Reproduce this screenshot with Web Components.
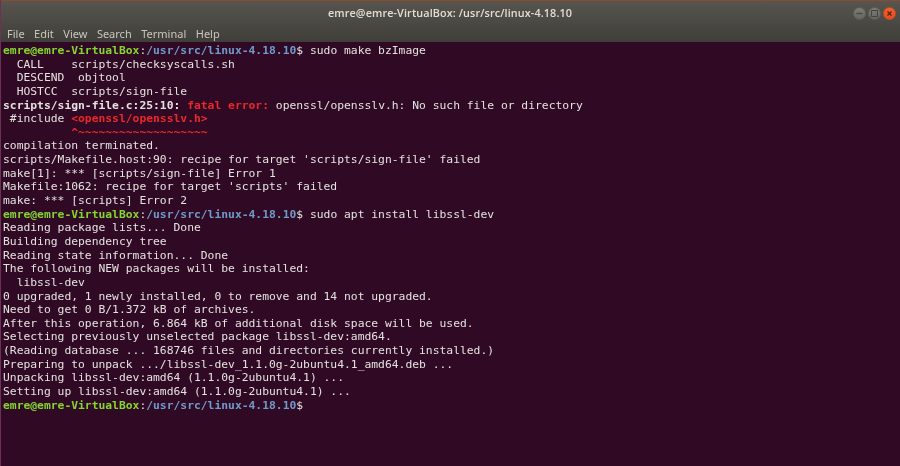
<!DOCTYPE html>
<html>
<head>
<meta charset="utf-8">
<title>Terminal</title>
<style>
  html, body { margin: 0; padding: 0; background: #300a24; }
</style>
</head>
<body>
<term-window title="emre@emre-VirtualBox: /usr/src/linux-4.18.10">
  <term-line><term-prompt>sudo make bzImage</term-prompt></term-line>
  <term-line>  CALL    scripts/checksyscalls.sh</term-line>
  <term-line>  DESCEND  objtool</term-line>
  <term-line>  HOSTCC  scripts/sign-file</term-line>
  <term-line><term-text bold>scripts/sign-file.c:25:10: </term-text><term-text bold kind="err">fatal error: </term-text>openssl/opensslv.h: No such file or directory</term-line>
  <term-line> #include <term-text bold kind="err">&lt;openssl/opensslv.h&gt;</term-text></term-line>
  <term-line>          <term-text bold kind="err">^~~~~~~~~~~~~~~~~~~~</term-text></term-line>
  <term-line>compilation terminated.</term-line>
  <term-line>scripts/Makefile.host:90: recipe for target 'scripts/sign-file' failed</term-line>
  <term-line>make[1]: *** [scripts/sign-file] Error 1</term-line>
  <term-line>Makefile:1062: recipe for target 'scripts' failed</term-line>
  <term-line>make: *** [scripts] Error 2</term-line>
  <term-line><term-prompt>sudo apt install libssl-dev</term-prompt></term-line>
  <term-line>Reading package lists... Done</term-line>
  <term-line>Building dependency tree</term-line>
  <term-line>Reading state information... Done</term-line>
  <term-line>The following NEW packages will be installed:</term-line>
  <term-line>  libssl-dev</term-line>
  <term-line>0 upgraded, 1 newly installed, 0 to remove and 14 not upgraded.</term-line>
  <term-line>Need to get 0 B/1.372 kB of archives.</term-line>
  <term-line>After this operation, 6.864 kB of additional disk space will be used.</term-line>
  <term-line>Selecting previously unselected package libssl-dev:amd64.</term-line>
  <term-line>(Reading database ... 168746 files and directories currently installed.)</term-line>
  <term-line>Preparing to unpack .../libssl-dev_1.1.0g-2ubuntu4.1_amd64.deb ...</term-line>
  <term-line>Unpacking libssl-dev:amd64 (1.1.0g-2ubuntu4.1) ...</term-line>
  <term-line>Setting up libssl-dev:amd64 (1.1.0g-2ubuntu4.1) ...</term-line>
  <term-line><term-prompt></term-prompt></term-line>
</term-window>

<script>
// the outer window: title bar, menu bar, and the screen as a slot
class TermWindow extends HTMLElement {
  constructor() {
    super();
    const shadow = this.attachShadow({ mode: "open" });
    shadow.innerHTML = `
      <style>
        :host {
          display: flex;
          flex-direction: column;
          width: 900px;
          height: 466px;
          overflow: hidden;
          background: #300a24;
          border-left: 1px solid #6e2f58;
          box-sizing: border-box;
        }
        .top {
          background: linear-gradient(#57554e, #3f3e39);
          border-top: 1px solid #8a4a34;
          margin-left: -1px;
        }
        .title {
          display: flex;
          align-items: center;
          justify-content: center;
          position: relative;
          height: 23px;
          color: #e2dfd6;
          font: 600 10.8px "Open Sans", "Noto Sans", sans-serif;
          letter-spacing: 0.12px;
        }
        .title span#title { filter: blur(0.2px); }
        .buttons {
          position: absolute;
          right: 4px;
          top: 6px;
          display: flex;
          gap: 2px;
          filter: blur(0.4px);
        }
        .btn {
          width: 13px;
          height: 13px;
          box-sizing: border-box;
          border-radius: 50%;
          background: linear-gradient(#7c7b75, #676660);
          border: 1px solid #5f5e58;
          display: flex;
          align-items: center;
          justify-content: center;
        }
        .btn.close { background: linear-gradient(#f0622f, #e24e1f); border-color: #d04a1e; }
        .btn svg { width: 11px; height: 11px; }
        .menu {
          display: flex;
          gap: 9.5px;
          height: 18px;
          align-items: center;
          padding-left: 7px;
          color: #c9c6bd;
          font: 11px "Noto Sans", "Open Sans", sans-serif;
          filter: blur(0.3px);
        }
        .screen {
          flex: 1;
          padding: 2px 0 0 2px;
          color: #e4e2e0;
          font: 11.33px/13.65px "DejaVu Sans Mono", monospace;
          filter: blur(0.35px);
        }
      </style>
      <div class="top">
        <div class="title">
          <span id="title"></span>
          <div class="buttons">
            <span class="btn"><svg viewBox="0 0 11 11"><path d="M2.5 5.5h6" stroke="#45443f" stroke-width="1.3"/></svg></span>
            <span class="btn"><svg viewBox="0 0 11 11"><rect x="2.5" y="2.5" width="6" height="6" fill="none" stroke="#45443f" stroke-width="1"/></svg></span>
            <span class="btn close"><svg viewBox="0 0 11 11"><path d="M3.5 3.5l4 4M7.5 3.5l-4 4" stroke="#5a2410" stroke-width="1.4"/></svg></span>
          </div>
        </div>
        <div class="menu">
          <span>File</span><span>Edit</span><span>View</span><span>Search</span><span>Terminal</span><span>Help</span>
        </div>
      </div>
      <div class="screen"><slot></slot></div>
    `;
    shadow.querySelector("#title").textContent = this.getAttribute("title");
  }
}

// one row of the terminal
// no whitespace in these shadow roots: the rows are white-space: pre
class TermLine extends HTMLElement {
  constructor() {
    super();
    const shadow = this.attachShadow({ mode: "open" });
    shadow.innerHTML = `<style>
        :host { display: block; height: 13.65px; white-space: pre; }
      </style><slot></slot>`;
  }
}

// coloured run of text inside a row
class TermText extends HTMLElement {
  constructor() {
    super();
    const shadow = this.attachShadow({ mode: "open" });
    shadow.innerHTML = `<style>
        :host { display: inline; }
        :host([bold]) { font-weight: bold; }
        :host([kind="err"]) { color: #e8282a; }
      </style><slot></slot>`;
  }
}

// the green user@host, blue path, then the typed command
class TermPrompt extends HTMLElement {
  constructor() {
    super();
    const shadow = this.attachShadow({ mode: "open" });
    shadow.innerHTML = `<style>
        :host { display: inline; }
        .host { color: #84d62f; font-weight: bold; }
        .path { color: #6f9bca; font-weight: bold; }
      </style><span class="host">emre@emre-VirtualBox</span>:<span class="path">/usr/src/linux-4.18.10</span>$ <slot></slot>`;
  }
}

customElements.define("term-window", TermWindow);
customElements.define("term-line", TermLine);
customElements.define("term-text", TermText);
customElements.define("term-prompt", TermPrompt);
</script>
</body>
</html>
